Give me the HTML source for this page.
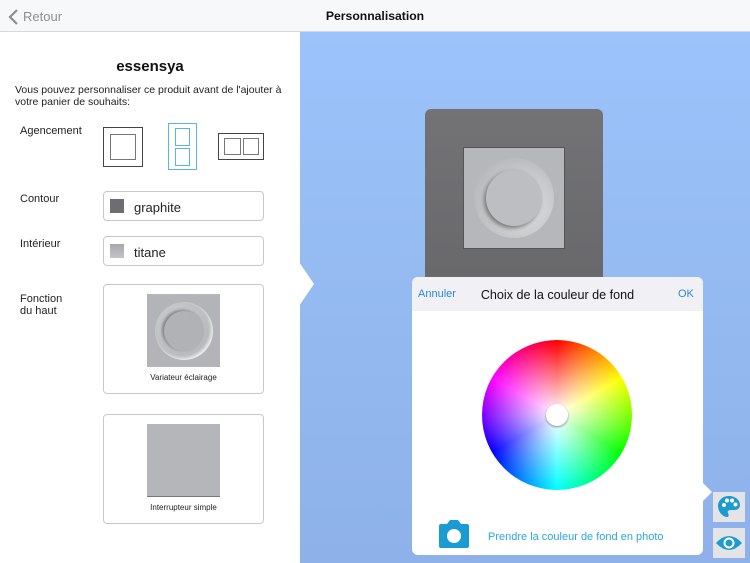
<!DOCTYPE html>
<html><head><meta charset="utf-8"><style>
*{margin:0;padding:0;box-sizing:border-box}
body{width:750px;height:563px;overflow:hidden;position:relative;font-family:"Liberation Sans",sans-serif;background:#fff}
.abs{position:absolute}
.hdr{left:0;top:0;width:750px;height:32px;background:#f7f8fa;border-bottom:1px solid #d8d8dc}
.blue{left:300px;top:32px;width:450px;height:531px;background:linear-gradient(#9cc3fb,#8db1e8)}
.lbl{font-size:11px;color:#222}
.field{left:103px;width:161px;height:30px;border:1px solid #c8c8cc;border-radius:4px;background:#fff;font-size:13px;color:#222}
.card{left:103px;width:161px;border:1px solid #c8c8cc;border-radius:4px;background:#fff}
</style></head><body>
<div class="abs hdr"></div>
<svg class="abs" style="left:8px;top:9px" width="12" height="16"><path d="M9 1 L2 8 L9 15" stroke="#8e8e93" stroke-width="2.2" fill="none"/></svg>
<div class="abs" style="left:23px;top:9px;font-size:13px;color:#8e8e93">Retour</div>
<div class="abs" style="left:0;width:750px;top:9px;text-align:center;font-size:12.2px;font-weight:bold;color:#111">Personnalisation</div>
<div class="abs blue"></div>
<svg class="abs" style="left:299px;top:262px" width="16" height="44"><path d="M0 0 L15 22 L0 44Z" fill="#fff"/></svg>

<div class="abs" style="left:0;width:300px;top:58px;text-align:center;font-size:15px;font-weight:bold;color:#111">essensya</div>
<div class="abs" style="left:15px;top:84px;width:285px;line-height:12px;font-size:10.5px;color:#222">Vous pouvez personnaliser ce produit avant de l'ajouter à votre panier de souhaits:</div>
<div class="abs lbl" style="left:20px;top:125px">Agencement</div>
<div class="abs" style="left:103px;top:127px;width:40px;height:40px;border:1px solid #444"><div class="abs" style="left:6px;top:6px;width:26px;height:26px;border:1px solid #777"></div></div>
<div class="abs" style="left:168px;top:123px;width:29px;height:47px;border:1px solid #5ab4e6"><div class="abs" style="left:6px;top:4px;width:15px;height:18px;border:1px solid #5ab4e6"></div><div class="abs" style="left:6px;top:24px;width:15px;height:18px;border:1px solid #5ab4e6"></div></div>
<div class="abs" style="left:218px;top:133px;width:46px;height:27px;border:1px solid #444"><div class="abs" style="left:5px;top:4px;width:17px;height:17px;border:1px solid #777"></div><div class="abs" style="left:24px;top:4px;width:16px;height:17px;border:1px solid #777"></div></div>

<div class="abs lbl" style="left:20px;top:193px">Contour</div>
<div class="abs field" style="top:191px"><div class="abs" style="left:6px;top:7px;width:14px;height:14px;background:#6e6e72"></div><div class="abs" style="left:30px;top:8px">graphite</div></div>
<div class="abs lbl" style="left:20px;top:238px">Intérieur</div>
<div class="abs field" style="top:236px"><div class="abs" style="left:6px;top:7px;width:14px;height:14px;background:linear-gradient(#a6a8ac,#c2c4c8)"></div><div class="abs" style="left:30px;top:8px">titane</div></div>
<div class="abs lbl" style="left:20px;top:293px;line-height:12px">Fonction<br>du haut</div>
<div class="abs card" style="top:284px;height:110px">
<div class="abs" style="left:43px;top:9px;width:73px;height:73px;background:#b2b4b7">
<div class="abs" style="left:8px;top:8px;width:58px;height:58px;border-radius:50%;background:radial-gradient(circle at 40% 40%,#d8d9db,#a5a7aa);box-shadow:inset -2px -2px 3px #eee"></div>
<div class="abs" style="left:17px;top:17px;width:40px;height:40px;border-radius:50%;background:#b0b2b5;box-shadow:-2px -1px 3px #7a7c80"></div></div>
<div class="abs" style="left:0;width:159px;top:88px;text-align:center;font-size:8px;color:#222">Variateur éclairage</div></div>
<div class="abs card" style="top:414px;height:110px">
<div class="abs" style="left:43px;top:9px;width:73px;height:73px;background:#b4b6b9;border-bottom:1px solid #777"></div>
<div class="abs" style="left:0;width:159px;top:88px;text-align:center;font-size:8px;color:#222">Interrupteur simple</div></div>

<div class="abs" style="left:425px;top:109px;width:178px;height:180px;border-radius:6px;background:linear-gradient(#737376,#68686b)"></div>
<div class="abs" style="left:463px;top:147px;width:102px;height:102px;background:#b5b7ba;border:1px solid #555"></div>
<div class="abs" style="left:474px;top:158px;width:80px;height:80px;border-radius:50%;background:radial-gradient(circle at 60% 60%,#e4e5e6,#a8aaad)"></div>
<div class="abs" style="left:486px;top:170px;width:56px;height:56px;border-radius:50%;background:#bcbec1;box-shadow:-2px 2px 4px #777"></div>

<div class="abs" style="left:412px;top:277px;width:291px;height:278px;border-radius:6px;background:#fff;overflow:hidden">
<div class="abs" style="left:0;top:0;width:291px;height:34px;background:#f1f1f5"></div>
<div class="abs" style="left:6px;top:11px;font-size:11px;color:#2a8ad8">Annuler</div>
<div class="abs" style="left:0;width:291px;top:11px;text-align:center;font-size:12.6px;color:#111">Choix de la couleur de fond</div>
<div class="abs" style="left:266px;top:11px;font-size:11px;color:#2a8ad8">OK</div>
<div class="abs" style="left:70px;top:63px;width:150px;height:150px;border-radius:50%;background:conic-gradient(#f00,#ff0 60deg,#0f0 120deg,#0ff 180deg,#00f 240deg,#f0f 300deg,#f00)"></div>
<div class="abs" style="left:70px;top:63px;width:150px;height:150px;border-radius:50%;background:radial-gradient(circle,#fff 0%,rgba(255,255,255,0) 70%)"></div>
<div class="abs" style="left:134px;top:127px;width:22px;height:22px;border-radius:50%;background:#fff;box-shadow:0 1px 2px #888"></div>
<svg class="abs" style="left:27px;top:243px" width="30" height="28"><path d="M8 4 L11 0 H19 L22 4 H28 Q30 4 30 6 V26 Q30 28 28 28 H2 Q0 28 0 26 V6 Q0 4 2 4Z" fill="#1b9bd1"/><circle cx="15" cy="16" r="7" fill="#fff"/></svg>
<div class="abs" style="left:76px;top:254px;font-size:11px;color:#2ba5dd">Prendre la couleur de fond en photo</div>
</div>
<svg class="abs" style="left:702px;top:482px" width="12" height="20"><path d="M0 0 L10 10 L0 20Z" fill="#fff"/></svg>
<div class="abs" style="left:713px;top:492px;width:32px;height:30px;background:#e4e4e8"></div>
<svg class="abs" style="left:716px;top:494px" width="26" height="26" viewBox="0 0 26 26"><path d="M13 2 C6 2 2 7 2 12 C2 18 7 23 11 23 C13 23 13 21 12 19 C11 17 13 16 15 16 H18 C22 16 24 14 24 11 C24 6 19 2 13 2Z" fill="#1b9bd1"/><circle cx="8" cy="11" r="2" fill="#fff"/><circle cx="11" cy="6.5" r="2" fill="#fff"/><circle cx="16" cy="6.5" r="2" fill="#fff"/><circle cx="19.5" cy="10.5" r="2" fill="#fff"/></svg>
<div class="abs" style="left:713px;top:528px;width:32px;height:30px;background:#e4e4e8"></div>
<svg class="abs" style="left:715px;top:533px" width="28" height="20" viewBox="0 0 28 20"><path d="M1 10 Q14 -4 27 10 Q14 24 1 10Z" fill="#1b9bd1"/><circle cx="14" cy="10" r="5.5" fill="#fff"/><circle cx="14" cy="10" r="3.5" fill="#1b9bd1"/></svg>
</body></html>
